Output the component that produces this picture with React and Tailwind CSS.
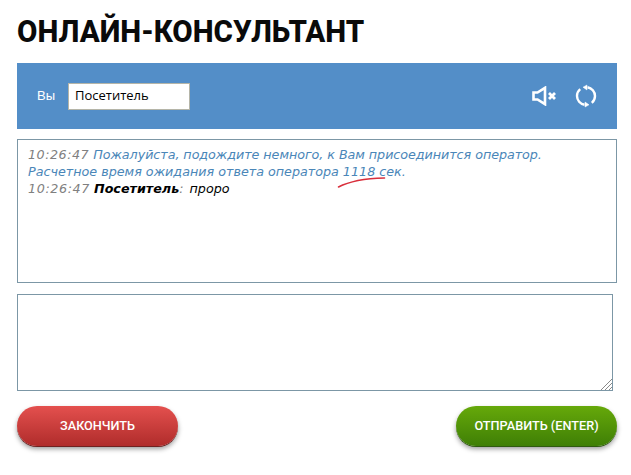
export default function App() {
  return (
    <div className="w-[631px] h-[475px] bg-white overflow-hidden px-[17px] pt-[13px]">
      <h1 className="font-[Roboto,sans-serif] font-extrabold text-[32px] leading-[36px] h-[36px] text-[#0a0a0a] whitespace-nowrap origin-left scale-x-[0.925]">ОНЛАЙН-КОНСУЛЬТАНТ</h1>
      <div className="mt-[14px] w-[600px] h-[66px] bg-[#538ec8] flex items-center pl-[20px] pr-[20px]">
        <span className="font-['Liberation_Sans',sans-serif] text-[13px] text-white w-[31px]">Вы</span>
        <div className="w-[122px] h-[27px] bg-white border border-[#b5b5a8] flex items-center pl-[6px] font-['Open_Sans',sans-serif] text-[13px] text-black">Посетитель</div>
        <svg className="ml-auto" width="24" height="20" viewBox="0 0 24 20" fill="none" stroke="#fff" strokeWidth="2.6">
          <path d="M1.500 6.500h4L13 1.800v16.400l-7.500-4.700h-4z" />
          <path d="M17 7l6 6M23 7l-6 6" strokeWidth="2.8" />
        </svg>
        <svg className="ml-[19px]" width="22" height="24" viewBox="0 0 22 24" fill="none" stroke="#fff" strokeWidth="2.4">
          <path d="M12.500 3.200A9 9 0 0 1 20 12a9 9 0 0 1-3.200 6.900" />
          <path d="M9.500 20.800A9 9 0 0 1 2 12a9 9 0 0 1 3.200-6.900" />
          <path d="M12 1l-4 2.200 4 2.800z" fill="#fff" strokeWidth="0.5" />
          <path d="M10 23l4-2.200-4-2.800z" fill="#fff" strokeWidth="0.5" />
        </svg>
      </div>
      <div className="relative mt-[10px] w-[600px] h-[144px] border border-[#7c97a6] pt-[6px] pl-[10px] font-['DejaVu_Sans',sans-serif] italic text-[12.72px] leading-[17px]">
        <div><span className="text-[#808080] tracking-[0.5px]">10:26:47</span> <span className="text-[#4a86b8] tracking-[-0.05px]">Пожалуйста, подождите немного, к Вам присоединится оператор.</span></div>
        <div className="text-[#4a86b8]">Расчетное время ожидания ответа оператора 1118 сек.</div>
        <div><span className="text-[#808080] tracking-[0.6px]">10:26:47</span> <span className="font-bold text-black">Посетитель</span><span className="text-[#808080]">:</span> <span className="text-black ml-[2px]">проро</span></div>
        <svg className="absolute left-[319px] top-[35px]" width="50" height="14" viewBox="0 0 50 14" fill="none">
          <path d="M1.500 12C12 6.500 26 3.500 47.500 3" stroke="#d92f3c" strokeWidth="1.6" strokeLinecap="round" />
        </svg>
      </div>
      <div className="relative mt-[11px] w-[596px] h-[97px] border border-[#7c97a6]">
        <svg className="absolute right-0 bottom-0" width="12" height="12" viewBox="0 0 12 12" stroke="#8a8a8a" strokeWidth="1">
          <path d="M1 12L12 1M5 12l7-7M9 12l3-3" />
        </svg>
      </div>
      <div className="mt-[15px] w-[600px] flex justify-between">
        <button className="w-[161px] h-[40px] rounded-[20px] bg-gradient-to-b from-[#e4504e] to-[#b02c2b] shadow-[0_1px_0_#6f2120,0_3px_5px_rgba(0,0,0,0.4)] font-[Roboto,sans-serif] font-medium text-[12.7px] text-white">ЗАКОНЧИТЬ</button>
        <button className="w-[161px] h-[40px] rounded-[20px] bg-gradient-to-b from-[#66a90a] to-[#3f7f06] shadow-[0_1px_0_#2f5a10,0_3px_5px_rgba(0,0,0,0.4)] font-[Roboto,sans-serif] font-medium text-[12.7px] text-white">ОТПРАВИТЬ (ENTER)</button>
      </div>
    </div>
  );
}
